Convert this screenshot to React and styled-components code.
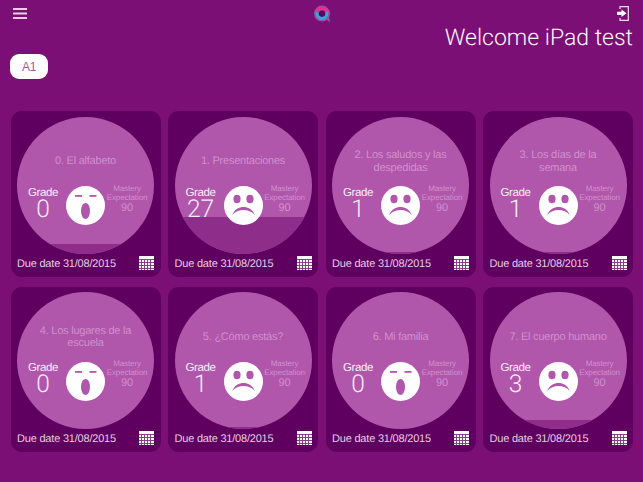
import React from "react";
import styled, { createGlobalStyle } from "styled-components";

const Global = createGlobalStyle`
  html, body { margin: 0; padding: 0; background: #7b0f75; }
  body {
    font-family: "Liberation Sans", Arial, sans-serif;
    text-rendering: geometricPrecision;
  }
  * { box-sizing: border-box; }
`;

const Page = styled.div`
  width: 643px;
  height: 482px;
  overflow: hidden;
  background: #7b0f75;
  display: flex;
  flex-direction: column;
`;

const TopBar = styled.header`
  height: 23px;
  padding: 7px 14px 0 13px;
  display: flex;
  justify-content: space-between;
  align-items: flex-start;
`;

const LogoMark = styled.svg`
  display: block;
  width: 18px;
  height: 18px;
  margin: -2px 1px 0 0;
`;

const ExitMark = styled.svg`
  display: block;
  width: 12px;
  height: 15px;
  margin-top: -1px;
`;

const Heading = styled.h1`
  margin: 0;
  padding-right: 10px;
  text-align: right;
  font: 300 23px/30px Roboto, "Liberation Sans", sans-serif;
  color: #fdf7fd;
  height: 30px;
`;

const LevelRow = styled.div`
  padding: 1px 0 0 10px;
  height: 58px;
`;

const LevelButton = styled.button`
  display: block;
  width: 38px;
  height: 25px;
  border: 0;
  padding: 0;
  border-radius: 9px;
  background: #fff;
  color: #a15aa0;
  font: 12px "Liberation Sans", sans-serif;
  letter-spacing: -0.4px;
`;

const Grid = styled.main`
  display: grid;
  grid-template-columns: repeat(4, 150px);
  grid-auto-rows: 165.5px;
  column-gap: 7.5px;
  row-gap: 10px;
  padding-left: 10.5px;
`;

const Card = styled.article`
  background: #5f0060;
  border-radius: 11px;
  padding: 5.5px 6.5px 0;
  display: flex;
  flex-direction: column;
`;

const Dial = styled.div`
  position: relative;
  width: 137px;
  height: 137px;
  border-radius: 50%;
  overflow: hidden;
  background: #b056ab;
  flex: none;
`;

const Fill = styled.div`
  position: absolute;
  left: 0;
  right: 0;
  bottom: 0;
  background: #8f2d8a;
`;

const DialBody = styled.div`
  position: relative;
  height: 100%;
  display: flex;
  flex-direction: column;
`;

const Title = styled.div`
  height: 40px;
  margin-top: 25px;
  padding: 0 14px;
  display: flex;
  align-items: center;
  justify-content: center;
  text-align: center;
  font-size: 11px;
  letter-spacing: -0.23px;
  line-height: 12.5px;
  color: #d290cd;
`;

const Stats = styled.div`
  display: grid;
  grid-template-columns: 49px 39px 49px;
  margin-top: 4.5px;
`;

const Grade = styled.div`
  text-align: center;
  color: #f8eef7;
  padding-left: 3px;
  margin-top: -0.5px;
`;

const GradeLabel = styled.div`
  font-size: 11.5px;
  letter-spacing: -0.4px;
  line-height: 14px;
`;

const GradeValue = styled.div`
  font: 300 24.5px/18px Roboto, "Liberation Sans", sans-serif;
`;

const Face = styled.svg`
  display: block;
  width: 39px;
  height: 39px;
`;

const Mastery = styled.div`
  text-align: center;
  color: #d290cd;
  font-size: 8px;
  letter-spacing: -0.1px;
  line-height: 9px;
  padding-right: 5px;
  margin-top: -2.5px;
  white-space: nowrap;
`;

const MasteryValue = styled.div`
  font-size: 11px;
  line-height: 13px;
`;

const CardFooter = styled.footer`
  display: flex;
  justify-content: space-between;
  align-items: center;
  margin-top: 2px;
  height: 16px;
  font-size: 11px;
  letter-spacing: -0.2px;
  color: #e3cee2;
`;

const Due = styled.span`
  white-space: nowrap;
`;

const CalendarMark = styled.svg`
  display: block;
  width: 15px;
  height: 14px;
  margin-top: -2px;
`;

const Hamburger = () => (
  <svg width="15" height="13" viewBox="0 0 15 13">
    <rect y="1" width="14" height="2" fill="#e9cfe7" />
    <rect y="5.5" width="14" height="2" fill="#e9cfe7" />
    <rect y="10" width="14" height="2" fill="#e9cfe7" />
  </svg>
);

const Logo = () => (
  <LogoMark viewBox="0 0 18 18">
    <circle cx="9" cy="8.600" r="8" fill="#a14f9f" />
    <path d="M13 14l4 3.400-1-5z" fill="#a14f9f" />
    <circle cx="9" cy="8.600" r="4.800" fill="#5f0060" stroke="#2fa8e0" strokeWidth="3" />
    <path d="M4.300 7.200A4.800 4.800 0 0 1 13.500 6.800" fill="none" stroke="#ee2a8c" strokeWidth="3" />
  </LogoMark>
);

const Exit = () => (
  <ExitMark viewBox="0 0 12 15">
    <path d="M3 3V.7h8.300v13.600H3V12" fill="none" stroke="#efe0ee" strokeWidth="1.200" />
    <path d="M0 5.700h4.500V3.500L9.500 7.300l-5 3.800V9H0z" fill="#fff" />
  </ExitMark>
);

const Calendar = () => (
  <CalendarMark viewBox="0 0 15 14">
    <rect width="15" height="14" fill="#fff" />
    {[3, 6, 9, 12].map((y) => (
      <rect key={y} x="0" y={y} width="15" height="1" fill="#8a3d8a" />
    ))}
    {[2, 5, 8, 11].map((x) => (
      <rect key={x} x={x} y="3" width="1" height="11" fill="#8a3d8a" />
    ))}
  </CalendarMark>
);

const Yawn = () => (
  <Face viewBox="0 0 39 39">
    <circle cx="19.500" cy="19.500" r="19.500" fill="#fff" />
    <rect x="9" y="9" width="7" height="1.800" fill="#b056ab" />
    <rect x="23.500" y="9" width="7" height="1.800" fill="#b056ab" />
    <ellipse cx="19.500" cy="25" rx="4.500" ry="8" fill="#b056ab" />
  </Face>
);

const Sad = () => (
  <Face viewBox="0 0 39 39">
    <circle cx="19.500" cy="19.500" r="19.500" fill="#fff" />
    <ellipse cx="13" cy="13" rx="3.600" ry="4.200" fill="#b056ab" />
    <ellipse cx="26" cy="13" rx="3.600" ry="4.200" fill="#b056ab" />
    <path d="M8 29c3-6 7-8 11.500-8s8.500 2 11.500 8c-3.500-3.500-7-5-11.500-5S11.500 25.500 8 29z" fill="#b056ab" />
  </Face>
);

const lessons = [
  { title: "0. El alfabeto", grade: 0, fill: 10 },
  { title: "1. Presentaciones", grade: 27, fill: 37 },
  { title: "2. Los saludos y las despedidas", grade: 1, fill: 1.5 },
  { title: "3. Los días de la semana", grade: 1, fill: 1.5 },
  { title: "4. Los lugares de la escuela", grade: 0, fill: 0 },
  { title: "5. ¿Cómo estás?", grade: 1, fill: 2.5 },
  { title: "6. Mi familia", grade: 0, fill: 0 },
  { title: "7. El cuerpo humano", grade: 3, fill: 9 },
];

export default function App() {
  return (
    <Page>
      <Global />
      <TopBar>
        <Hamburger />
        <Logo />
        <Exit />
      </TopBar>
      <Heading>Welcome iPad test</Heading>
      <LevelRow>
        <LevelButton>A1</LevelButton>
      </LevelRow>
      <Grid>
        {lessons.map((l) => (
          <Card key={l.title}>
            <Dial>
              <Fill style={{ height: l.fill }} />
              <DialBody>
                <Title>{l.title}</Title>
                <Stats>
                  <Grade>
                    <GradeLabel>Grade</GradeLabel>
                    <GradeValue>{l.grade}</GradeValue>
                  </Grade>
                  {l.grade === 0 ? <Yawn /> : <Sad />}
                  <Mastery>
                    Mastery
                    <br />
                    Expectation
                    <MasteryValue>90</MasteryValue>
                  </Mastery>
                </Stats>
              </DialBody>
            </Dial>
            <CardFooter>
              <Due>Due date 31/08/2015</Due>
              <Calendar />
            </CardFooter>
          </Card>
        ))}
      </Grid>
    </Page>
  );
}
